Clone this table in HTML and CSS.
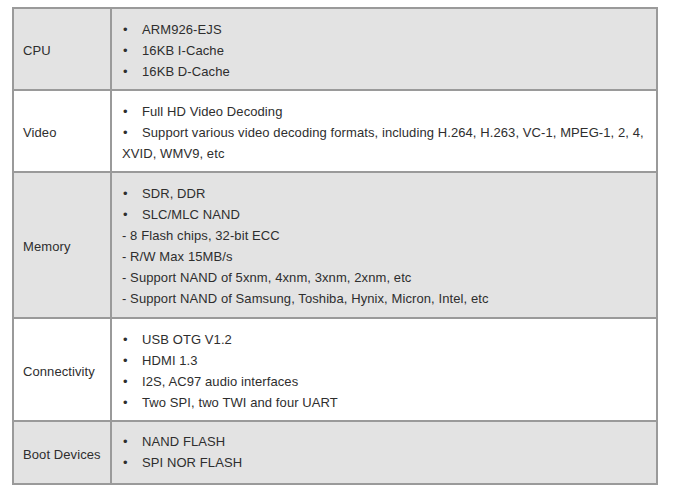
FILE: index.html
```html
<!DOCTYPE html>
<html>
<head>
<meta charset="utf-8">
<link rel="stylesheet" href="styles.css">
</head>
<body>
<table class="spec">
  <colgroup><col class="c1"><col class="c2"></colgroup>
  <tr class="shade">
    <td class="label">CPU</td>
    <td class="val">
      <p><span class="b">•</span>ARM926-EJS</p>
      <p><span class="b">•</span>16KB I-Cache</p>
      <p><span class="b">•</span>16KB D-Cache</p>
    </td>
  </tr>
  <tr>
    <td class="label">Video</td>
    <td class="val">
      <p><span class="b">•</span>Full HD Video Decoding</p>
      <p><span class="b">•</span>Support various video decoding formats, including H.264, H.263, VC-1, MPEG-1, 2, 4, XVID, WMV9, etc</p>
    </td>
  </tr>
  <tr class="shade">
    <td class="label">Memory</td>
    <td class="val tall1">
      <p><span class="b">•</span>SDR, DDR</p>
      <p><span class="b">•</span>SLC/MLC NAND</p>
      <p>- 8 Flash chips, 32-bit ECC</p>
      <p>- R/W Max 15MB/s</p>
      <p>- Support NAND of 5xnm, 4xnm, 3xnm, 2xnm, etc</p>
      <p>- Support NAND of Samsung, Toshiba, Hynix, Micron, Intel, etc</p>
    </td>
  </tr>
  <tr>
    <td class="label">Connectivity</td>
    <td class="val">
      <p><span class="b">•</span>USB OTG V1.2</p>
      <p><span class="b">•</span>HDMI 1.3</p>
      <p><span class="b">•</span>I2S, AC97 audio interfaces</p>
      <p><span class="b">•</span>Two SPI, two TWI and four UART</p>
    </td>
  </tr>
  <tr class="shade">
    <td class="label">Boot Devices</td>
    <td class="val tall2">
      <p><span class="b">•</span>NAND FLASH</p>
      <p><span class="b">•</span>SPI NOR FLASH</p>
    </td>
  </tr>
</table>
</body>
</html>
```
FILE: styles.css
```css
html, body {
  margin: 0;
  padding: 0;
  background: #fff;
}
body {
  font-family: "Liberation Sans", Arial, sans-serif;
  font-size: 13px;
  color: #2e2e2e;
  letter-spacing: 0.09px;
}
.spec {
  border-collapse: collapse;
  table-layout: fixed;
  width: 646px;
  margin: 7px 0 0 12px;
}
.c1 { width: 98px; }
.spec td {
  border: 2px solid #9a9a9a;
  padding: 10px 4px 7px 10px;
  line-height: 21px;
}
.spec tr.shade td {
  background: #e3e3e3;
}
.spec td.label {
  vertical-align: middle;
  padding-left: 9px;
  padding-right: 0;
  white-space: nowrap;
}
.val {
  vertical-align: top;
}
.spec td.tall1 { padding-bottom: 8px; }
.spec td.tall2 { padding-top: 9px; padding-bottom: 10px; }
.val p {
  margin: 0;
}
.b {
  display: inline-block;
  width: 19px;
  padding-left: 1px;
  letter-spacing: 0;
}
```
